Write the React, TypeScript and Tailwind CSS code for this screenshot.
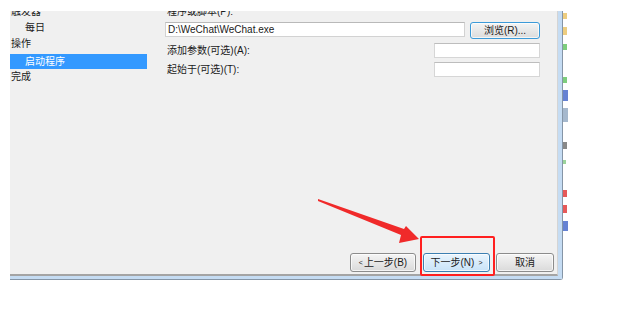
import React from "react";

const font = { fontFamily: '"Liberation Sans", "Noto Sans CJK SC", sans-serif' };

function Btn({ children, w, primary, focus }: { children: React.ReactNode; w: string; primary?: boolean; focus?: boolean }) {
  const base =
    "flex items-center justify-center rounded-[3px] border text-[10px] leading-none text-[#1a1a1a] shadow-[inset_0_0_0_1px_rgba(255,255,255,0.7)]";
  const tone = primary
    ? "bg-gradient-to-b from-[#eaf5fd] to-[#c8e3f8] border-[#3c7fb1]"
    : focus
    ? "bg-gradient-to-b from-[#f4f4f4] to-[#dcdcdc] border-[#3c9ad8]"
    : "bg-gradient-to-b from-[#f5f5f5] to-[#dadada] border-[#8c8c8c]";
  return <div className={`${base} ${tone} ${w}`}>{children}</div>;
}

export default function App() {
  return (
    <div className="relative w-[620px] h-[309px] bg-white overflow-hidden" style={font}>
      <div className="flex pt-[11px] pl-[10px]">
        {/* dialog */}
        <div className="border-r border-b border-[#8595a6] rounded-br-[3px]">
          <div className="border-r-[4px] border-b-[3px] border-[#c5dcf3]">
            <div className="border-r border-r-[#d4d4d4] border-b-2 border-b-[#a4a4a4]">
              <div className="w-[547px] h-[263px] bg-[#f0f0f0] overflow-hidden flex">
                {/* sidebar */}
                <div className="w-[140px] flex flex-col text-[10px] leading-none text-[#1a1a1a]">
                  <div className="h-[16px] -mt-[7px] flex items-center pl-[1px]">触发器</div>
                  <div className="h-[16px] flex items-center pl-[15px]">每日</div>
                  <div className="h-[16px] flex items-center pl-[1px]">操作</div>
                  <div className="h-[15px] mt-[2px] w-[137px] bg-[#3399ff] text-white flex items-center pl-[15px]">启动程序</div>
                  <div className="h-[16px] flex items-center pl-[1px]">完成</div>
                </div>
                {/* main */}
                <div className="flex-1 flex flex-col pl-[15px] pr-[3px] text-[10px] leading-none text-[#1a1a1a]">
                  <div className="pr-[14px] flex flex-col">
                    <div className="h-[16px] -mt-[7px] flex items-center pl-[2px]">程序或脚本(P):</div>
                    <div className="flex items-start mt-[2px]">
                      <div className="w-[300px] h-[15px] bg-white border border-[#d2d2d2] border-t-[#b9b9b9] flex items-center pl-[2px]">
                        D:\WeChat\WeChat.exe
                      </div>
                      <div className="ml-[5px]">
                        <Btn w="w-[70px] h-[17px]" focus>
                          浏览(R)...
                        </Btn>
                      </div>
                    </div>
                    <div className="flex items-center justify-between mt-[4px] h-[15px]">
                      <span className="pl-[2px]">添加参数(可选)(A):</span>
                      <div className="w-[106px] h-[15px] bg-white border border-[#d6d6d6] border-t-[#bdbdbd]" />
                    </div>
                    <div className="flex items-center justify-between mt-[4px] h-[15px]">
                      <span className="pl-[2px]">起始于(可选)(T):</span>
                      <div className="w-[106px] h-[15px] bg-white border border-[#d6d6d6] border-t-[#bdbdbd]" />
                    </div>
                  </div>
                  <div className="mt-auto pb-[2px] flex justify-end">
                    <Btn w="w-[66px] h-[19px]">
                      <span className="text-[7px] mr-[1px]">&lt;</span>上一步(B)
                    </Btn>
                    <div className="ml-[7px]">
                      <Btn w="w-[67px] h-[19px]" primary>
                        下一步(N)<span className="text-[7px] ml-[4px]">&gt;</span>
                      </Btn>
                    </div>
                    <div className="ml-[6px]">
                      <Btn w="w-[58px] h-[19px]">取消</Btn>
                    </div>
                  </div>
                </div>
              </div>
            </div>
          </div>
        </div>
        {/* desktop strip fragments */}
        <div className="w-[6px] flex flex-col">
          <div className="mt-[2px] h-[6px] w-[4px] bg-[#e8c060] opacity-80" />
          <div className="mt-[8px] h-[8px] w-[4px] bg-[#e8c060] opacity-80" />
          <div className="mt-[9px] h-[6px] w-[4px] bg-[#5cc05c] opacity-80" />
          <div className="mt-[27px] h-[6px] w-[4px] bg-[#5cc05c] opacity-80" />
          <div className="mt-[7px] h-[11px] w-[5px] bg-[#3f63c8] opacity-80" />
          <div className="mt-[7px] h-[14px] w-[5px] bg-[#8fa6c0] opacity-80" />
          <div className="mt-[20px] h-[7px] w-[4px] bg-[#555] opacity-70" />
          <div className="mt-[11px] h-[4px] w-[3px] bg-[#70c070] opacity-70" />
          <div className="mt-[26px] h-[7px] w-[4px] bg-[#e03030] opacity-80" />
          <div className="mt-[8px] h-[8px] w-[4px] bg-[#e03030] opacity-80" />
          <div className="mt-[8px] h-[10px] w-[5px] bg-[#3f63c8] opacity-80" />
        </div>
      </div>

      {/* red highlight box */}
      <div className="absolute left-[420px] top-[236px] w-[75px] h-[40px] border-2 border-[#ff1f1f] rounded-[2px]" />

      {/* red arrow */}
      <svg className="absolute left-0 top-0 pointer-events-none" width="620" height="309" viewBox="0 0 620 309">
        <polygon
          points="318,199 404,229 406,226 419,239 399,243 401,235 318,201"
          fill="#f02a2a"
        />
      </svg>
    </div>
  );
}
